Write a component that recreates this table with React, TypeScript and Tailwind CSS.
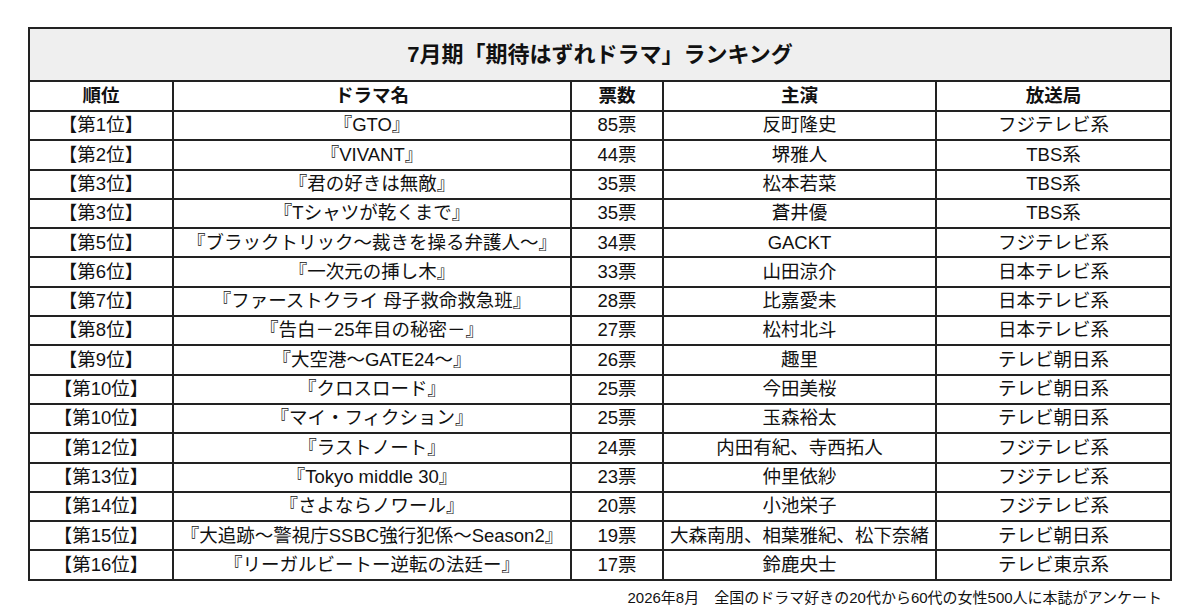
const rows: [string, string, string, string, string][] = [
  ['【第1位】', '『GTO』', '85票', '反町隆史', 'フジテレビ系'],
  ['【第2位】', '『VIVANT』', '44票', '堺雅人', 'TBS系'],
  ['【第3位】', '『君の好きは無敵』', '35票', '松本若菜', 'TBS系'],
  ['【第3位】', '『Tシャツが乾くまで』', '35票', '蒼井優', 'TBS系'],
  ['【第5位】', '『ブラックトリック〜裁きを操る弁護人〜』', '34票', 'GACKT', 'フジテレビ系'],
  ['【第6位】', '『一次元の挿し木』', '33票', '山田涼介', '日本テレビ系'],
  ['【第7位】', '『ファーストクライ 母子救命救急班』', '28票', '比嘉愛未', '日本テレビ系'],
  ['【第8位】', '『告白－25年目の秘密－』', '27票', '松村北斗', '日本テレビ系'],
  ['【第9位】', '『大空港〜GATE24〜』', '26票', '趣里', 'テレビ朝日系'],
  ['【第10位】', '『クロスロード』', '25票', '今田美桜', 'テレビ朝日系'],
  ['【第10位】', '『マイ・フィクション』', '25票', '玉森裕太', 'テレビ朝日系'],
  ['【第12位】', '『ラストノート』', '24票', '内田有紀、寺西拓人', 'フジテレビ系'],
  ['【第13位】', '『Tokyo middle 30』', '23票', '仲里依紗', 'フジテレビ系'],
  ['【第14位】', '『さよならノワール』', '20票', '小池栄子', 'フジテレビ系'],
  ['【第15位】', '『大追跡〜警視庁SSBC強行犯係〜Season2』', '19票', '大森南朋、相葉雅紀、松下奈緒', 'テレビ朝日系'],
  ['【第16位】', '『リーガルビートー逆転の法廷ー』', '17票', '鈴鹿央士', 'テレビ東京系'],
];

const font = { fontFamily: '"Liberation Sans", "Noto Sans CJK JP", sans-serif' };

export default function App() {
  return (
    <div className="w-[1200px] h-[615px] bg-white pt-[27px] px-[28px] text-[#111]" style={font}>
      <table className="w-[1142px] border-collapse border-2 border-[#222] table-fixed">
        <colgroup>
          <col className="w-[144px]" />
          <col className="w-[398px]" />
          <col className="w-[92px]" />
          <col className="w-[273px]" />
          <col className="w-[235px]" />
        </colgroup>
        <thead>
          <tr className="h-[53px] bg-[#efefef]">
            <th colSpan={5} className="border-2 border-[#222] text-[22px] font-bold text-center">
              7月期「期待はずれドラマ」ランキング
            </th>
          </tr>
          <tr className="h-[30px]">
            {['順位', 'ドラマ名', '票数', '主演', '放送局'].map((h) => (
              <th key={h} className="border-2 border-[#222] text-[18.5px] font-bold text-center leading-none">
                {h}
              </th>
            ))}
          </tr>
        </thead>
        <tbody>
          {rows.map((r, i) => (
            <tr key={i} className="h-[29.3px]">
              {r.map((c, j) => (
                <td key={j} className="border-2 border-[#222] text-[18.5px] text-center leading-none whitespace-nowrap">
                  {c}
                </td>
              ))}
            </tr>
          ))}
        </tbody>
      </table>
      <p className="mt-[6px] pr-[10px] text-right text-[15px]">
        2026年8月　全国のドラマ好きの20代から60代の女性500人に本誌がアンケート
      </p>
    </div>
  );
}
